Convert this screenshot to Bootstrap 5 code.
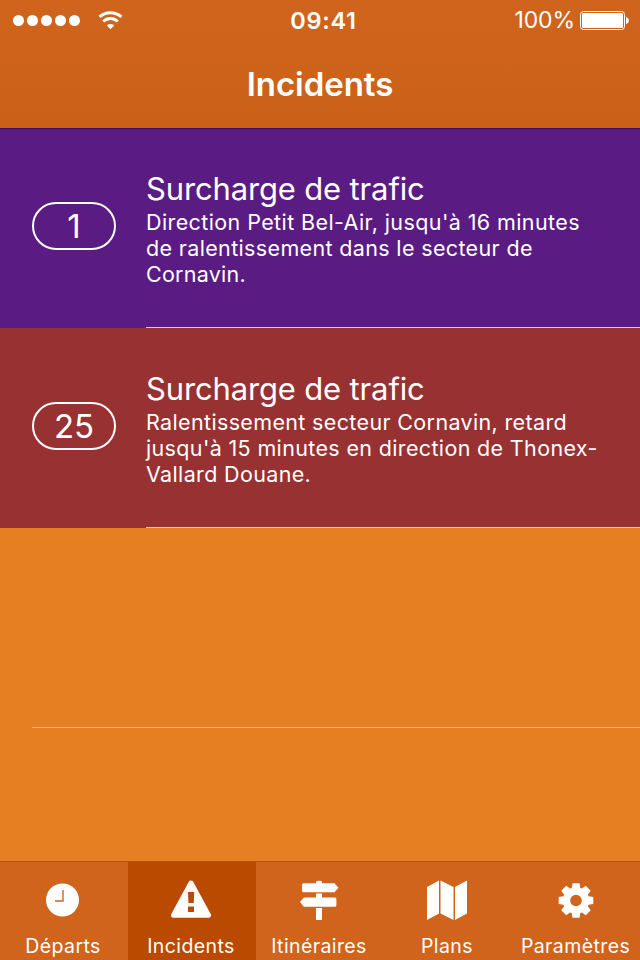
<!DOCTYPE html>
<html lang="fr">
<head>
<meta charset="utf-8">
<meta name="viewport" content="width=device-width, initial-scale=1">
<title>Incidents</title>
<link href="https://cdn.jsdelivr.net/npm/bootstrap@5.3.0/dist/css/bootstrap.min.css" rel="stylesheet">
<style>
  body { font-family: Inter, "Liberation Sans", sans-serif; background: #e67e22; color: #fff; }
  .screen { width: 640px; height: 960px; overflow: hidden; }
  .topbar { height: 128px; background: linear-gradient(#d0641c, #cb6118); box-shadow: 0 1px 0 rgba(40, 10, 60, .6); z-index: 1; }
  .status { height: 41px; padding: 0 11px 0 13px; display: grid; grid-template-columns: 1fr auto 1fr; line-height: 41px; }
  .signal { gap: 3px; }
  .signal i { width: 11px; height: 11px; border-radius: 50%; background: #fff; }
  .wifi { margin-left: 15px; }
  .clock { font-size: 23.5px; font-weight: 600; letter-spacing: .7px; padding-left: 5px; }
  .charge { font-size: 23px; letter-spacing: -.1px; }
  .heading { font-size: 33px; font-weight: 600; line-height: 40px; margin-top: 23px; letter-spacing: -.05px; }
  .incident { height: 200px; }
  .line-a { background: #5a1c82; }
  .line-b { background: #983132; }
  .badge-col { width: 146px; padding: 74px 0 0 32px; }
  .route { width: 84px; height: 48px; border: 2px solid #fff; font-size: 33px; line-height: 44px; font-weight: 400; }
  .detail { padding-top: 42px; border-bottom: 1px solid rgba(255, 255, 255, .75); }
  .incident-title { font-size: 31px; line-height: 38px; font-weight: 400; letter-spacing: -.15px; }
  .incident-text { font-size: 21.5px; line-height: 26px; margin-top: 1px; letter-spacing: .35px; white-space: nowrap; }
  .incident-text .wide { letter-spacing: .4px; }
  .incident-text .tight { letter-spacing: .25px; }
  .blank { height: 200px; margin-left: 32px; border-bottom: 1px solid rgba(255, 255, 255, .4); }
  .tabs { height: 99px; background: #d0641c; border-top: 1px solid #b0560f; }
  .tab { width: 128px; color: #fff; text-decoration: none; font-size: 19.5px; line-height: 24px; letter-spacing: .4px; padding: 16px 2px 0 0; }
  .tab:last-child { padding-right: 1px; }
  .tab.on { background: #ba4a00; }
  .tab svg { width: 44px; height: 44px; }
  .tab span { margin-top: 12px; white-space: nowrap; }
</style>
</head>
<body>
<div class="screen d-flex flex-column">
  <header class="topbar position-relative">
    <div class="status">
      <div class="d-flex align-items-center signal">
        <i></i><i></i><i></i><i></i><i></i>
        <svg class="wifi" width="26" height="20" viewBox="0 0 26 20" fill="none" stroke="#fff" stroke-width="3">
          <path d="M1.500 5.900a16.500 16.500 0 0 1 22 0M5.300 10.500a10.300 10.300 0 0 1 14.400 0"/>
          <path d="M12.500 18.300 8.800 14.500a5.500 5.500 0 0 1 7.400 0Z" fill="#fff" stroke="none"/>
        </svg>
      </div>
      <div class="clock">09:41</div>
      <div class="d-flex align-items-center justify-content-end charge">
        <span>100%</span>
        <svg class="ms-1" width="50" height="20" viewBox="0 0 50 20">
          <rect x="1.500" y=".500" width="44" height="18" rx="3" fill="none" stroke="#fff"/>
          <rect x="3" y="2" width="41" height="15" rx="1.500" fill="#fff"/>
          <path d="M47 6q2.800.7 2.800 3.500t-2.800 3.500Z" fill="#fff"/>
        </svg>
      </div>
    </div>
    <h1 class="heading text-center mb-0">Incidents</h1>
  </header>

  <main class="flex-grow-1">
    <article class="incident line-a d-flex">
      <div class="badge-col flex-shrink-0"><div class="route rounded-pill text-center">1</div></div>
      <div class="detail flex-grow-1">
        <h2 class="incident-title mb-0">Surcharge de trafic</h2>
        <p class="incident-text mb-0"><span class="wide">Direction Petit Bel-Air, jusqu'à 16 minutes</span><br>de ralentissement dans le secteur de<br><span class="tight">Cornavin.</span></p>
      </div>
    </article>
    <article class="incident line-b d-flex">
      <div class="badge-col flex-shrink-0"><div class="route rounded-pill text-center">25</div></div>
      <div class="detail flex-grow-1">
        <h2 class="incident-title mb-0">Surcharge de trafic</h2>
        <p class="incident-text mb-0">Ralentissement secteur Cornavin, retard<br>jusqu'à 15 minutes en direction de Thonex-<br>Vallard Douane.</p>
      </div>
    </article>
    <div class="blank"></div>
  </main>

  <nav class="tabs d-flex flex-shrink-0">
    <a class="tab d-flex flex-column align-items-center" href="#">
      <svg viewBox="0 0 44 44"><circle cx="21.500" cy="22" r="16.500" fill="#fff"/><path d="M22 12v11h-8" fill="none" stroke="#d0641c" stroke-width="1.400"/></svg>
      <span>Départs</span>
    </a>
    <a class="tab on d-flex flex-column align-items-center" href="#">
      <svg viewBox="0 0 44 44"><path d="M22 5 39.500 37.300H4.500Z" fill="#fff" stroke="#fff" stroke-width="5" stroke-linejoin="round"/><path d="M19 14h6.200l-.4 11h-5.400zM19 28.500h6v5.500h-6z" fill="#ba4a00"/></svg>
      <span>Incidents</span>
    </a>
    <a class="tab d-flex flex-column align-items-center" href="#">
      <svg viewBox="0 0 44 44" fill="#fff"><path d="M19 5.200v-1.200q0-1.300 3-1.300t3 1.300v1.200h12.500l3.900 4.600-3.900 4.500h-31q-1.500 0-1.500-1.500v-6.100q0-1.500 1.500-1.500zM19 15.500h6v4h12.900q1.500 0 1.500 1.500v6.200q0 1.500-1.500 1.500h-31l-3.900-4.600 3.900-4.600h12.100zM19 30h6v12h-6z"/></svg>
      <span>Itinéraires</span>
    </a>
    <a class="tab d-flex flex-column align-items-center" href="#">
      <svg viewBox="0 0 44 44" fill="#fff"><path d="M2 9 14 2.500v33L2 42zM15.500 2.500 28.500 9v33l-13-6.500zM30 9 42 2.500v33L30 42z"/></svg>
      <span>Plans</span>
    </a>
    <a class="tab d-flex flex-column align-items-center" href="#">
      <svg viewBox="-22 -22.500 44 44"><g fill="#fff"><circle r="13.200"/><path d="M-4.500-11-3.500-17.300h7L4.500-11v22l-1 6.300h-7l-1-6.300z"/><path d="M-4.500-11-3.500-17.300h7L4.500-11v22l-1 6.300h-7l-1-6.300z" transform="rotate(45)"/><path d="M-4.500-11-3.500-17.300h7L4.500-11v22l-1 6.300h-7l-1-6.300z" transform="rotate(90)"/><path d="M-4.500-11-3.500-17.300h7L4.500-11v22l-1 6.300h-7l-1-6.300z" transform="rotate(135)"/></g><circle r="5.800" fill="#d0641c"/></svg>
      <span>Paramètres</span>
    </a>
  </nav>
</div>
<script src="https://cdn.jsdelivr.net/npm/bootstrap@5.3.0/dist/js/bootstrap.bundle.min.js"></script>
</body>
</html>
